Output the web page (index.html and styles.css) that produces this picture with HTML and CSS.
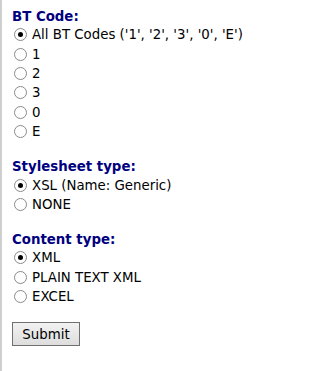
FILE: index.html
```html
<!DOCTYPE html>
<html>
<head>
<meta charset="utf-8">
<link rel="stylesheet" href="styles.css">
</head>
<body>
<form class="page">
  <div class="section">
    <div class="heading">BT Code:</div>
    <label class="row"><input type="radio" name="bt" checked><span>All BT Codes ('1', '2', '3', '0', 'E')</span></label>
    <label class="row"><input type="radio" name="bt"><span>1</span></label>
    <label class="row"><input type="radio" name="bt"><span>2</span></label>
    <label class="row"><input type="radio" name="bt"><span>3</span></label>
    <label class="row"><input type="radio" name="bt"><span>0</span></label>
    <label class="row"><input type="radio" name="bt"><span>E</span></label>
  </div>
  <div class="section">
    <div class="heading">Stylesheet type:</div>
    <label class="row"><input type="radio" name="ss" checked><span>XSL (Name: Generic)</span></label>
    <label class="row"><input type="radio" name="ss"><span>NONE</span></label>
  </div>
  <div class="section">
    <div class="heading">Content type:</div>
    <label class="row"><input type="radio" name="ct" checked><span>XML</span></label>
    <label class="row"><input type="radio" name="ct"><span>PLAIN TEXT XML</span></label>
    <label class="row"><input type="radio" name="ct"><span>EXCEL</span></label>
  </div>
  <div class="actions">
    <button type="button" class="submit">Submit</button>
  </div>
</form>
</body>
</html>
```
FILE: styles.css
```css
html, body {
  margin: 0;
  padding: 0;
  background: #fff;
}
body {
  font-family: "DejaVu Sans", Verdana, sans-serif;
  font-size: 13.33px;
  color: #000;
}
.page {
  min-height: 371px;
  box-sizing: border-box;
  border-left: 2px solid #cfcfcf;
  padding: 8px 0 0 10px;
  display: flex;
  flex-direction: column;
  gap: 17px;
}
.section {
  display: flex;
  flex-direction: column;
}
.heading {
  height: 17px;
  line-height: 17px;
  font-weight: bold;
  color: #000080;
}
.row {
  display: flex;
  align-items: center;
  height: 19.4px;
  white-space: nowrap;
}
.row input {
  -webkit-appearance: none;
  appearance: none;
  box-sizing: border-box;
  margin: 0 5px 0 2px;
  width: 13px;
  height: 13px;
  border: 1px solid #8a8a8a;
  border-radius: 50%;
  background: #fff;
  display: flex;
  align-items: center;
  justify-content: center;
}
.row input:checked::after {
  content: "";
  width: 5px;
  height: 5px;
  border-radius: 50%;
  background: #000;
}
.actions {
  margin-top: -1px;
}
.submit {
  font-family: "DejaVu Sans", Verdana, sans-serif;
  font-size: 13.33px;
  color: #000;
  width: 68px;
  height: 24px;
  padding: 0;
  border: 1px solid #707070;
  background: linear-gradient(#f2f2f2, #dddddd);
  border-radius: 0;
}
```
